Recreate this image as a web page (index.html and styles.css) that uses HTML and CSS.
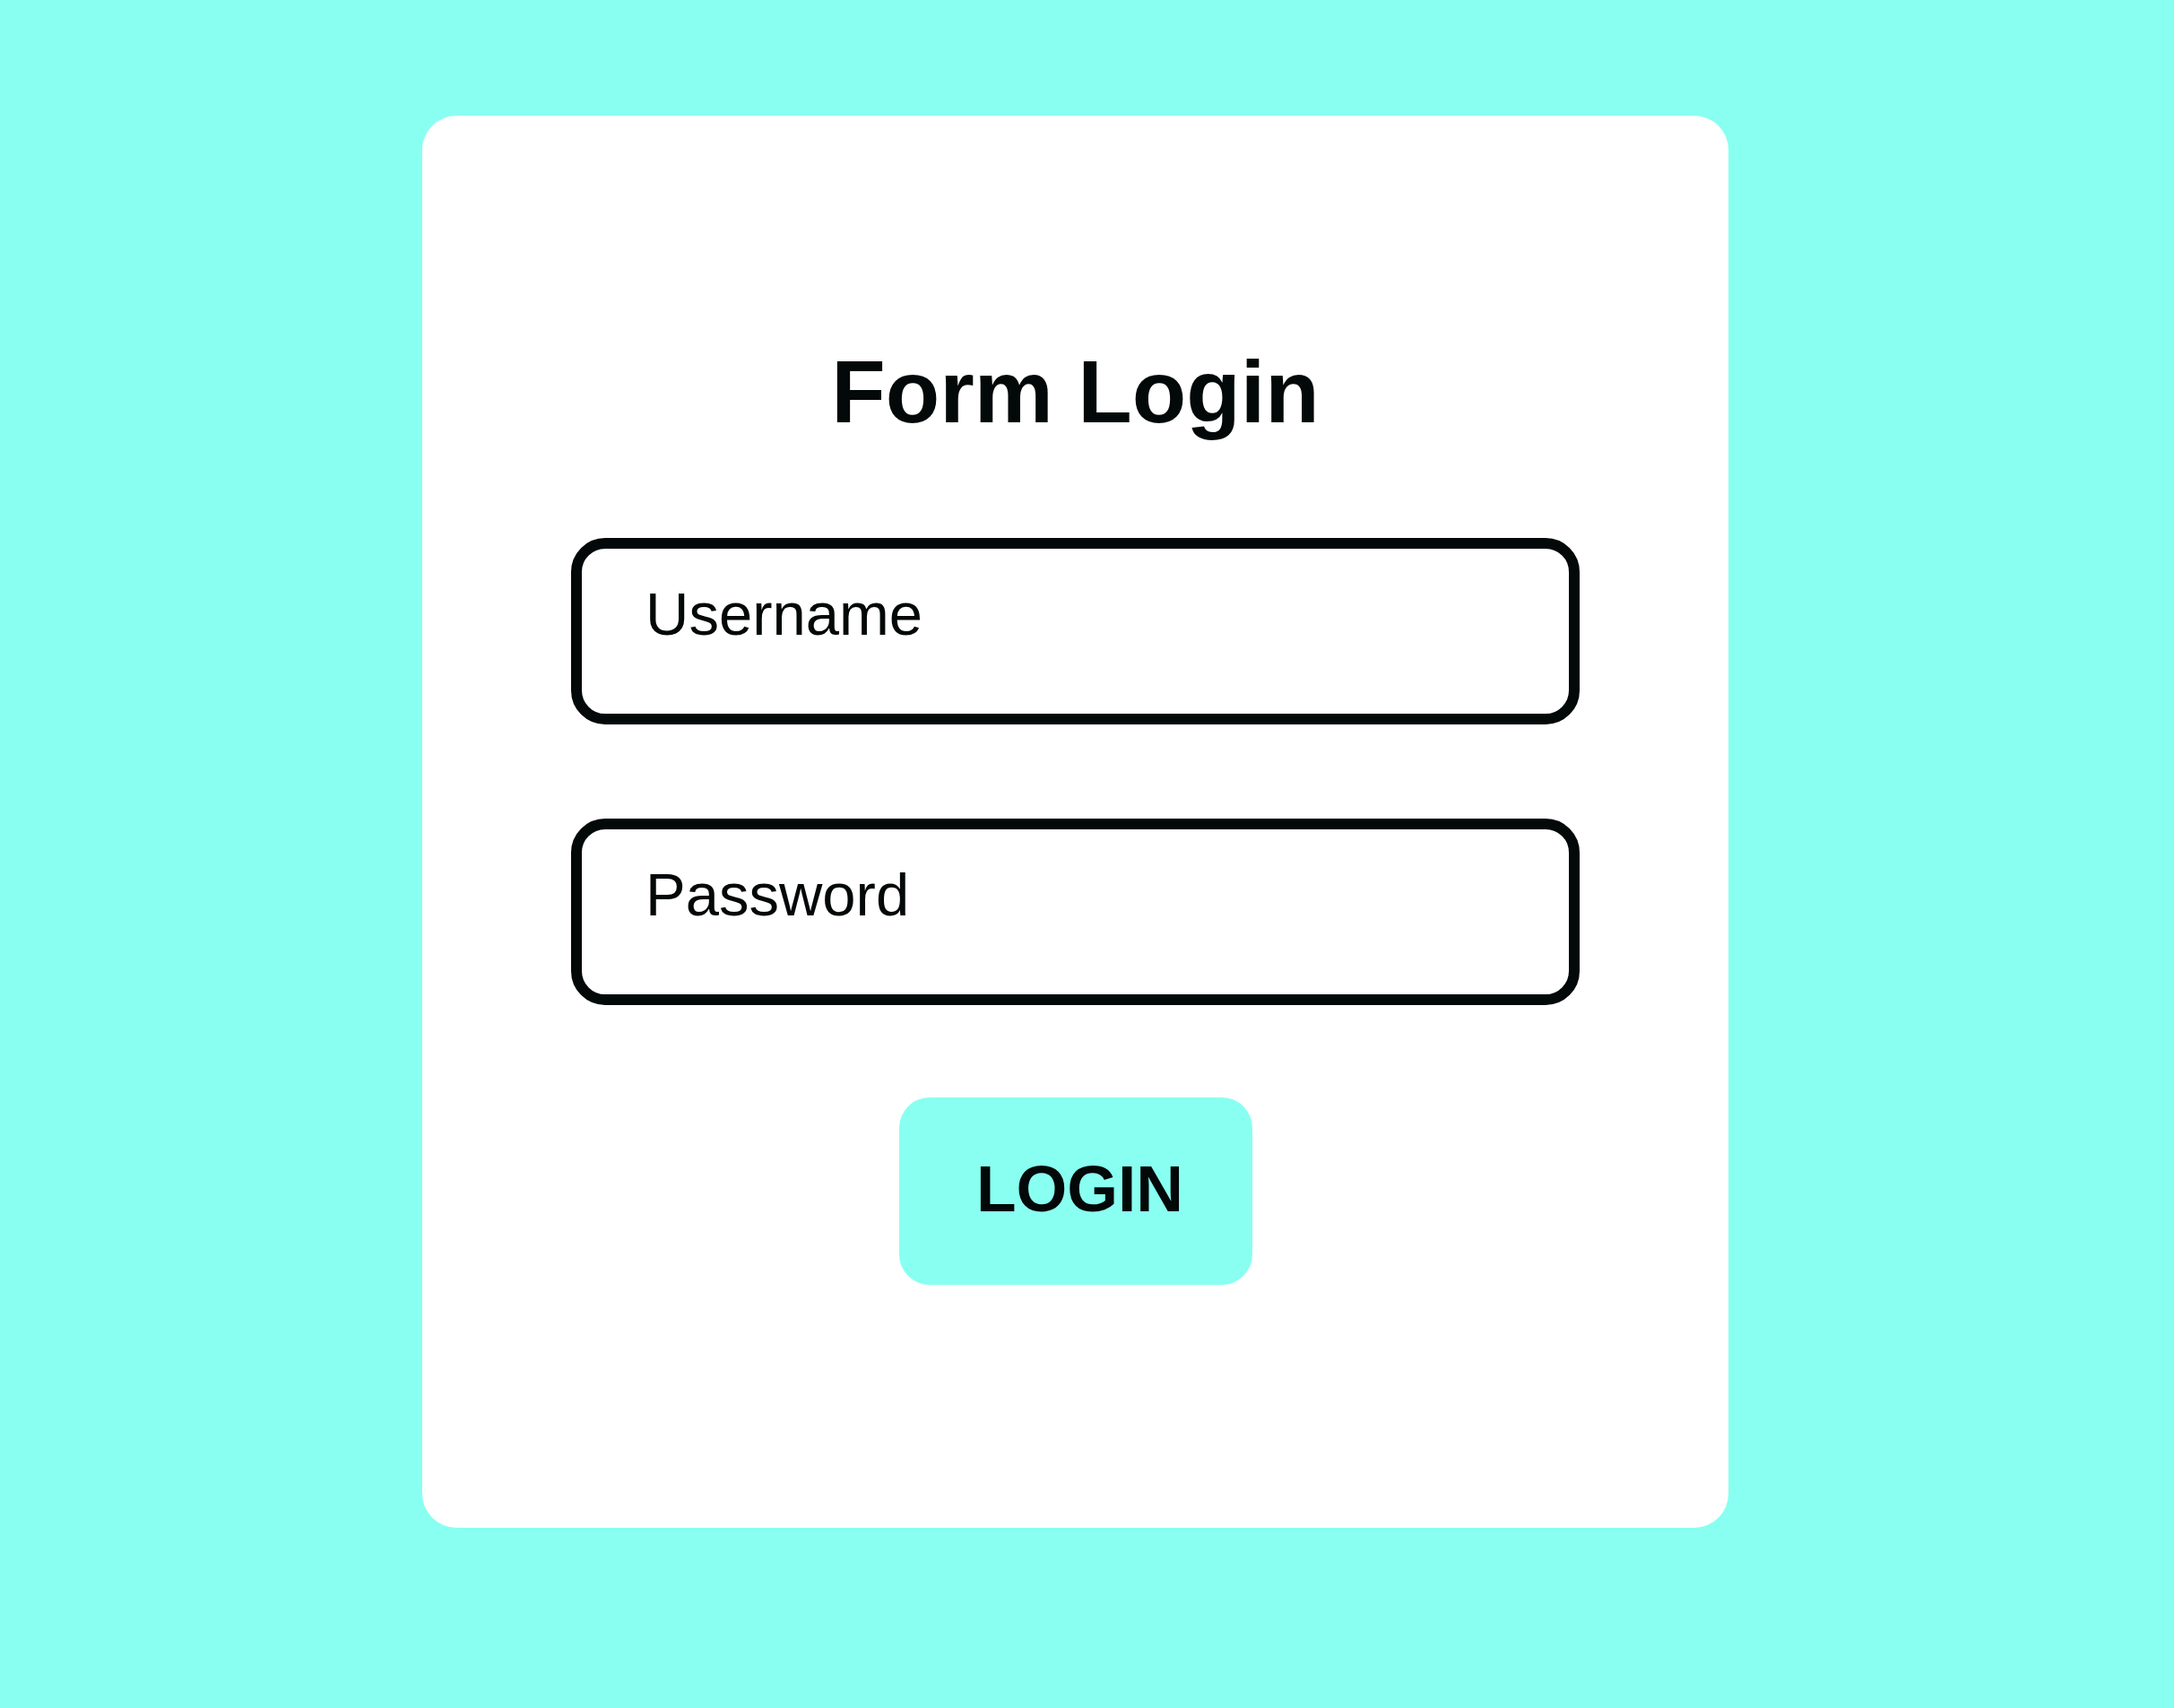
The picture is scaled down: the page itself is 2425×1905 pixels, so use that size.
FILE: index.html
```html
<!DOCTYPE html>
<html lang="en">
<head>
<meta charset="utf-8">
<title>Form Login</title>
<link rel="stylesheet" href="styles.css">
</head>
<body>
  <main class="card">
    <h1 class="title">Form Login</h1>
    <form class="form">
      <input class="field" type="text" placeholder="Username">
      <input class="field" type="password" placeholder="Password">
      <button class="btn" type="button">LOGIN</button>
    </form>
  </main>
</body>
</html>
```

FILE: styles.css
```css
html, body {
  margin: 0;
  padding: 0;
}

body {
  background: #89fff1;
  font-family: "Liberation Sans", Arial, sans-serif;
  min-height: 1905px;
  padding-top: 129px;
  padding-left: 471px;
  box-sizing: border-box;
}

.card {
  width: 1457px;
  height: 1575px;
  box-sizing: border-box;
  background: #ffffff;
  border-radius: 38px;
  padding-top: 252px;
  display: flex;
  flex-direction: column;
  align-items: center;
}

.title {
  margin: 0;
  font-size: 99px;
  line-height: 112px;
  font-weight: 700;
  color: #030808;
  text-align: center;
}

.form {
  margin-top: 107px;
  display: flex;
  flex-direction: column;
  align-items: center;
  gap: 105px;
}

.field {
  display: block;
  width: 1125px;
  height: 208px;
  box-sizing: border-box;
  border: 12px solid #030808;
  border-radius: 38px;
  padding: 40px 70px 80px 71px;
  font-family: "Liberation Sans", Arial, sans-serif;
  font-size: 67px;
  line-height: 76px;
  color: #030808;
  background: #ffffff;
  outline: none;
}

.field::placeholder {
  color: #030808;
  opacity: 1;
}

.btn {
  margin-top: -2px;
  width: 394px;
  height: 209px;
  box-sizing: border-box;
  border: none;
  border-radius: 34px;
  background: #89fff1;
  font-family: "Liberation Sans", Arial, sans-serif;
  font-size: 73px;
  font-weight: 700;
  color: #030808;
  padding: 0 0 6px 10px;
  cursor: pointer;
}
```
